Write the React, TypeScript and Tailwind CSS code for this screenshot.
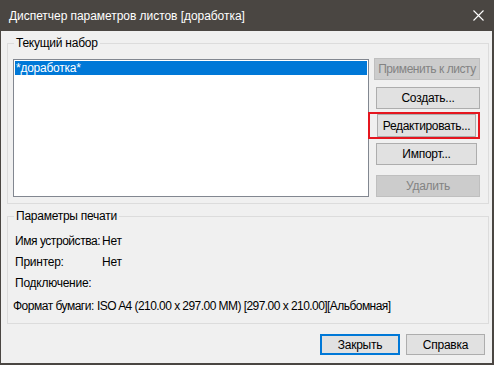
const font = "font-['Liberation_Sans','Noto_Sans',sans-serif]";

function Button({
  label,
  disabled,
  focused,
  className = '',
}: {
  label: string;
  disabled?: boolean;
  focused?: boolean;
  className?: string;
}) {
  const tone = disabled
    ? 'border border-[#bfbfbf] bg-[#cccccc] text-[#838383]'
    : focused
      ? 'border-2 border-[#0078d7] bg-[#e1e1e1] text-black'
      : 'border border-[#adadad] bg-[#e1e1e1] text-black';
  return (
    <div
      className={`flex shrink-0 items-center justify-center whitespace-nowrap text-[12px] leading-none ${tone} ${className}`}
    >
      {label}
    </div>
  );
}

function Row({
  label,
  value,
  labelClass,
  valueClass = '',
  className = '',
}: {
  label: string;
  value: string;
  labelClass: string;
  valueClass?: string;
  className?: string;
}) {
  return (
    <div className={`flex h-[16px] items-center whitespace-nowrap leading-[16px] ${className}`}>
      <span className={`shrink-0 ${labelClass}`}>{label}</span>
      <span className={valueClass}>{value}</span>
    </div>
  );
}

export default function App() {
  return (
    <div
      className={`flex h-[365px] w-[494px] flex-col bg-[#4a4642] text-[12px] tracking-[-0.25px] text-black ${font}`}
    >
      {/* title bar */}
      <div className="flex h-[31px] shrink-0 items-center justify-between pl-[9px] pr-[10px] text-white">
        <span className="leading-[16px] tracking-[-0.05px]">Диспетчер параметров листов [доработка]</span>
        <svg width="11" height="11" viewBox="0 0 11 11" className="mt-[-1px]">
          <path d="M0.5 0.5 L10.5 10.5 M10.5 0.5 L0.5 10.5" stroke="#fff" strokeWidth="1.1" />
        </svg>
      </div>

      {/* body */}
      <div className="mb-[2px] ml-px mr-[2px] flex flex-1 flex-col bg-[#f0f0f0] pl-[6px] pr-[3px]">
        <fieldset className="mt-[4px] border border-[#dcdcdc] pb-[6px] pl-[5px] pr-[8px] pt-[8px]">
          <legend className="ml-px px-[2px] leading-[16px]">Текущий набор</legend>
          <div className="flex items-start">
            <div className="h-[138px] w-[356px] shrink-0 border border-[#828790] bg-white p-px">
              <div className="h-[14px] bg-[#0078d7] pl-px leading-[14px] text-white">*доработка*</div>
            </div>
            <div className="-mt-px ml-[5px] flex flex-col items-start">
              <Button label="Применить к листу" disabled className="h-[22px] w-[106px] tracking-[-0.45px]" />
              <Button label="Создать..." className="ml-[2px] mt-[7px] h-[22px] w-[104px]" />
              <div className="-ml-[6px] mt-[3px] h-[27px] w-[112px] border-2 border-[#e5161f] pl-[7px] pr-[2px]">
                <Button label="Редактировать..." className="h-[23px] w-[99px] tracking-[-0.35px]" />
              </div>
              <Button label="Импорт..." className="ml-[2px] mt-[4px] h-[22px] w-[101px]" />
              <Button label="Удалить" disabled className="ml-[2px] mt-[10px] h-[22px] w-[104px]" />
            </div>
          </div>
        </fieldset>

        <fieldset className="mt-[4px] border border-[#dcdcdc] pb-[9px] pl-[5px] pr-[8px] pt-[9px]">
          <legend className="ml-px px-[2px] leading-[16px]">Параметры печати</legend>
          <Row label="Имя устройства:" value="Нет" labelClass="ml-[2px] w-[87px] tracking-[-0.45px]" />
          <Row label="Принтер:" value="Нет" labelClass="ml-[2px] w-[87px]" className="mt-[5px]" />
          <Row label="Подключение:" value="" labelClass="ml-[2px] w-[87px]" className="mt-[5px]" />
          <Row
            label="Формат бумаги:"
            value="ISO A4 (210.00 x 297.00 MM) [297.00 x 210.00][Альбомная]"
            labelClass="w-[84px] tracking-[-0.5px]"
            valueClass="tracking-[-0.55px]"
            className="mt-[7px]"
          />
        </fieldset>

        <div className="mt-[10px] flex justify-end gap-[6px] pr-[4px]">
          <Button label="Закрыть" focused className="h-[21px] w-[80px]" />
          <Button label="Справка" className="h-[21px] w-[79px]" />
        </div>
      </div>
    </div>
  );
}
